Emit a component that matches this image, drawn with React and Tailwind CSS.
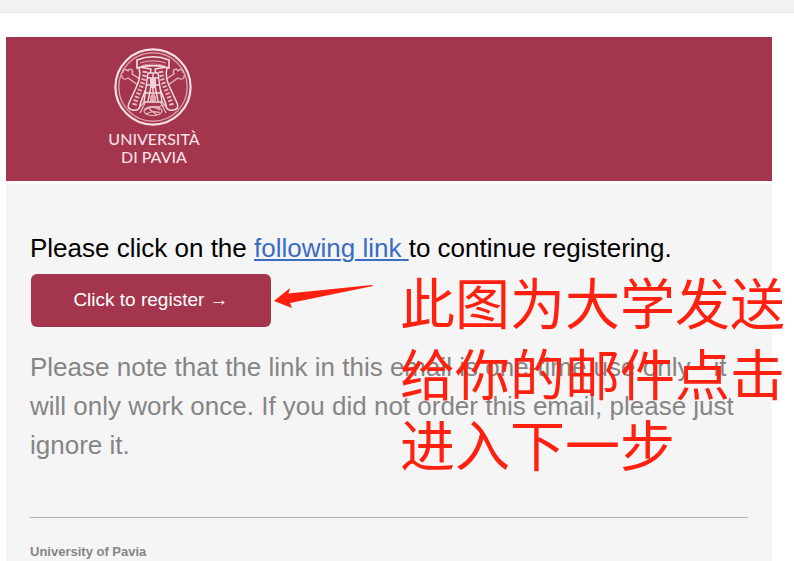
function Crest() {
  return (
    <svg viewBox="0 0 80 80" className="size-20" fill="none" stroke="#f6dfe4" aria-hidden="true">
      <circle cx="39" cy="40" r="37.6" strokeWidth="2.2" />
      <circle cx="39" cy="40" r="34.2" strokeWidth="1.4" stroke="#dc9dac" />
      {/* crossed bones */}
      <g stroke="#e8bac4" strokeWidth="1.3">
        <path d="M9 26c-1-3 3-5 5-2 2-4 6-1 4 3l8 5M8 28c-1 4 3 5 6 3l10 7" />
        <path d="M69 26c1-3-3-5-5-2-2-4-6-1-4 3l-8 5M70 28c1 4-3 5-6 3l-10 7" />
        <path d="M33 52 24 62M45 52l9 10M31 56l-5 10M47 56l5 10" />
      </g>
      {/* lettered ribbons */}
      <g fill="#a3364c" strokeWidth="1.5">
        <path d="M25 20c2 9 0 15-4 23l-6 13c-2 4 0 7 4 7 4 1 7-1 7-5 3-11 9-19 11-36z" />
        <path d="M53 20c-2 9 0 15 4 23l6 13c2 4 0 7-4 7-4 1-7-1-7-5-3-11-9-19-11-36z" />
      </g>
      <path d="M31 24c-1 14-8 22-11 36M47 24c1 14 8 22 11 36" strokeWidth="4.5" strokeDasharray="1.8 2" stroke="#e8bac4" />
      {/* saddle bar */}
      <path d="M23 13c10-4 22-4 32 0v8c-10-3-22-3-32 0z" fill="#a3364c" strokeWidth="1.6" />
      <path d="M26 16c9-3 17-3 26 0M27 19c9-3 15-3 24 0" strokeWidth="1.2" stroke="#dc9dac" />
      {/* central tower */}
      <path d="M34 26h10l4 29H30z" fill="#a3364c" strokeWidth="1.4" />
      <path d="M34 31h10M33 38h12M32 46h14M34 54l3-15M44 54l-3-15M39 27v28" strokeWidth="1.4" />
      <path d="M36 32h6v9h-6z" fill="#eed0d7" stroke="none" />
      <path d="M36 50l3-5 3 5v4h-6z" fill="#e3a9b6" stroke="none" />
      {/* base knot */}
      <g strokeWidth="1.2" stroke="#e8bac4">
        <ellipse cx="39" cy="64" rx="9" ry="4.5" />
        <path d="M31 63c4-4 12-3 15 0M32 67c5-3 10-3 14-1M34 61l9 7M41 59l5 2M38 65h7M44 60l6-2" />
      </g>
    </svg>
  )
}

function Logo() {
  return (
    <div className="w-24 flex flex-col items-center text-[#f6dfe4]">
      <Crest />
      <div className="mt-[3px] text-center font-['Lato',sans-serif] font-medium text-base leading-[18px] whitespace-nowrap">
        UNIVERSITÀ
        <br />
        DI PAVIA
      </div>
    </div>
  )
}

function Annotation() {
  return (
    <>
      <svg
        viewBox="0 0 100 26"
        className="absolute left-[274px] top-[284px] w-[100px]"
        fill="#ff2010"
        aria-hidden="true"
      >
        <path d="M0 17 16 4 14.500 9.500 98 1 99 2 16 19 18 24z" />
      </svg>
      <p className="absolute left-[400px] top-[265px] w-[388px] font-['Noto_Sans_CJK_SC',sans-serif] text-[55px] leading-[71px] text-[#ff2010]">
        此图为大学发送给你的邮件点击进入下一步
      </p>
    </>
  )
}

export default function App() {
  return (
    <div className="relative min-h-screen flex flex-col bg-white font-['Liberation_Sans',Arial,sans-serif]">
      <div className="h-[13px] bg-[#f2f2f3] border-b border-[#e2e2e4]" />
      <div className="grow flex flex-col mt-6 ml-[6px] mr-[22px]">
        <header className="bg-[#a3364c] pl-[100px] pt-[10px] h-36">
          <Logo />
        </header>
        <main className="grow px-6 pt-[45px] border-t-3 border-white bg-[#f5f5f5]">
          <p className="text-[26px] leading-[38px] text-black">
            Please click on the{' '}
            <a href="#register" className="text-[#3a6cc4] underline decoration-2 underline-offset-2">
              following link{' '}
            </a>
            to continue registering.
          </p>
          <button
            type="button"
            className="mt-[7px] ml-px block w-60 h-[53px] rounded-md bg-[#a3364c] text-[19px] text-white"
          >
            Click to register →
          </button>
          <p className="mt-[21px] text-[26px] leading-[39px] text-[#858585]">
            Please note that the link in this email is one-time use only - it will only work once. If you
            did not order this email, please just ignore it.
          </p>
          <footer className="mt-[52px] border-t border-[#b4b4b4] pt-[26px] text-[13px] leading-4 font-bold text-[#858585]">
            University of Pavia
          </footer>
        </main>
      </div>
      <Annotation />
    </div>
  )
}
